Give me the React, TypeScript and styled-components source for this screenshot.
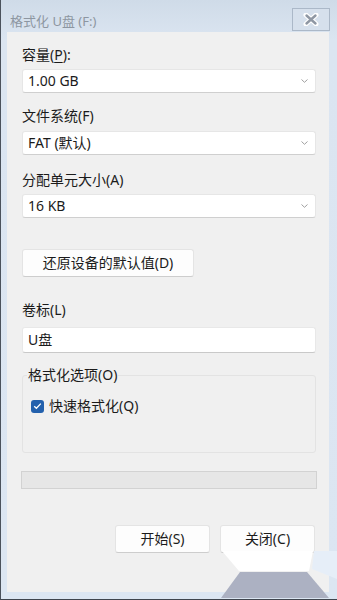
import styled, { createGlobalStyle } from 'styled-components';

const GlobalStyle = createGlobalStyle`
  html, body {
    margin: 0;
    padding: 0;
    background: #dbe5f1;
  }
  * {
    box-sizing: border-box;
  }
`;

const uiFont = `"Segoe UI", "Noto Sans", "Noto Sans CJK SC", sans-serif`;

const Window = styled.div`
  position: relative;
  width: 337px;
  height: 600px;
  display: flex;
  flex-direction: column;
  background: linear-gradient(#cfdbe8, #dbe5f1 40px, #dce6f2);
  border-left: 1px solid #4b525c;
  border-bottom: 1px solid #3f454e;
  font-family: ${uiFont};
  color: #1b1b1b;
  overflow: hidden;
`;

const TitleBar = styled.div`
  height: 32px;
  display: flex;
  align-items: center;
  justify-content: space-between;
  padding: 8px 7px 1px 9px;
`;

const Title = styled.span`
  font-size: 13px;
  line-height: 18px;
  color: #8d96a1;
  padding-top: 2px;
`;

const CloseBox = styled.div`
  width: 38px;
  height: 23px;
  border: 1px solid #abb8c8;
  background: #d6e0ec;
  display: flex;
  align-items: center;
  justify-content: center;
`;

const Body = styled.div`
  flex: 1;
  margin: 0 8px 7px 6px;
  background: #f0f0f0;
  padding: 13px 13px 0 15px;
  display: flex;
  flex-direction: column;
`;

const Label = styled.div<{ $mt?: number }>`
  font-size: 14px;
  line-height: 20px;
  margin-top: ${({ $mt }) => $mt || 0}px;
  color: #1b1b1b;
`;

const Key = styled.span`
  text-decoration: underline;
  text-underline-offset: 2px;
`;

const Select = styled.div<{ $mt?: number }>`
  height: 24px;
  margin-top: ${({ $mt }) => $mt || 0}px;
  background: #ffffff;
  border: 1px solid #e6e6e6;
  border-bottom-color: #cfcfcf;
  border-radius: 3px;
  display: flex;
  align-items: center;
  justify-content: space-between;
  padding: 0 6px 0 5px;
  font-size: 14px;
  line-height: 20px;
`;

const TextInput = styled.div<{ $mt?: number }>`
  height: 26px;
  margin-top: ${({ $mt }) => $mt || 0}px;
  background: #ffffff;
  border: 1px solid #e8e8e8;
  border-bottom: 1px solid #c9c9c9;
  border-radius: 3px;
  display: flex;
  align-items: center;
  padding: 0 5px;
  font-size: 14px;
  line-height: 20px;
`;

const Button = styled.div<{ $w: number; $mt?: number }>`
  width: ${({ $w }) => $w}px;
  height: 28px;
  margin-top: ${({ $mt }) => $mt || 0}px;
  background: #fdfdfd;
  border: 1px solid #e4e4e4;
  border-bottom-color: #cdcdcd;
  border-radius: 3px;
  display: flex;
  align-items: center;
  justify-content: center;
  font-size: 14px;
  line-height: 20px;
  color: #1b1b1b;
`;

const Group = styled.fieldset<{ $mt?: number }>`
  margin: ${({ $mt }) => $mt || 0}px 0 0 0;
  padding: 0 4px 39px 8px;
  border: 1px solid #e3e3e3;
  border-radius: 3px;
  min-width: 0;
`;

const Legend = styled.legend`
  padding: 0 1px;
  margin-left: -4px;
  font-size: 14px;
  line-height: 20px;
  color: #1b1b1b;
`;

const CheckRow = styled.div`
  margin-top: 14px;
  height: 14px;
  display: flex;
  align-items: center;
  gap: 5px;
  font-size: 14px;
  line-height: 20px;
`;

const CheckBox = styled.div`
  width: 13px;
  height: 13px;
  border-radius: 3px;
  background: #2361ad;
  display: flex;
  align-items: center;
  justify-content: center;
`;

const Progress = styled.div<{ $mt?: number }>`
  height: 18px;
  margin-top: ${({ $mt }) => $mt || 0}px;
  margin-right: -1px;
  margin-left: -1px;
  background: #e6e6e6;
  border: 1px solid #d2d2d2;
`;

const Footer = styled.div`
  margin-top: 36px;
  display: flex;
  justify-content: flex-end;
  gap: 10px;
  margin-right: 1px;
`;

const Corner = styled.svg`
  position: absolute;
  right: 0;
  bottom: 0;
  pointer-events: none;
`;

const Chevron = () => (
  <svg width="9" height="6" viewBox="0 0 9 6">
    <polyline points="1.5,1.5 4.5,4.3 7.5,1.5" fill="none" stroke="#a0a0a0" strokeWidth="1" />
  </svg>
);

const DropDown = ({ value, mt }: { value: string; mt?: number }) => (
  <Select $mt={mt}>
    <span>{value}</span>
    <Chevron />
  </Select>
);

export default function App() {
  return (
    <>
      <GlobalStyle />
      <Window>
        <TitleBar>
          <Title>格式化 U盘 (F:)</Title>
          <CloseBox>
            <svg width="16" height="13" viewBox="0 0 16 13">
              <path d="M3 2 L13 11 M13 2 L3 11" stroke="#ffffff" strokeWidth="5" strokeLinecap="round" />
              <path d="M3.5 2.5 L12.5 10.5 M12.5 2.5 L3.5 10.5" stroke="#8f97a3" strokeWidth="2.4" strokeLinecap="round" />
            </svg>
          </CloseBox>
        </TitleBar>
        <Body>
          <Label>
            容量(<Key>P</Key>):
          </Label>
          <DropDown value="1.00 GB" mt={4} />
          <Label $mt={13}>文件系统(F)</Label>
          <DropDown value="FAT (默认)" mt={5} />
          <Label $mt={15}>分配单元大小(A)</Label>
          <DropDown value="16 KB" mt={4} />
          <Button $w={172} $mt={31}>还原设备的默认值(D)</Button>
          <Label $mt={23}>卷标(L)</Label>
          <TextInput $mt={7}>U盘</TextInput>
          <Group $mt={12}>
            <Legend>格式化选项(O)</Legend>
            <CheckRow>
              <CheckBox>
                <svg width="9" height="8" viewBox="0 0 9 8">
                  <polyline points="1.2,4.2 3.4,6.3 7.8,1.6" fill="none" stroke="#ffffff" strokeWidth="1.3" />
                </svg>
              </CheckBox>
              <span>快速格式化(Q)</span>
            </CheckRow>
          </Group>
          <Progress $mt={18} />
          <Footer>
            <Button $w={95}>开始(S)</Button>
            <Button $w={95}>关闭(C)</Button>
          </Footer>
        </Body>
        <Corner width="120" height="48" viewBox="0 0 120 48">
          <polygon points="5,0 96,0 92,20 22,20" fill="#ffffff" />
          <polygon points="97,0 120,0 120,28 95,18" fill="#e6eef8" />
          <polygon points="23,21 90,21 112,47 4,47" fill="#acb1c2" />
        </Corner>
      </Window>
    </>
  );
}
